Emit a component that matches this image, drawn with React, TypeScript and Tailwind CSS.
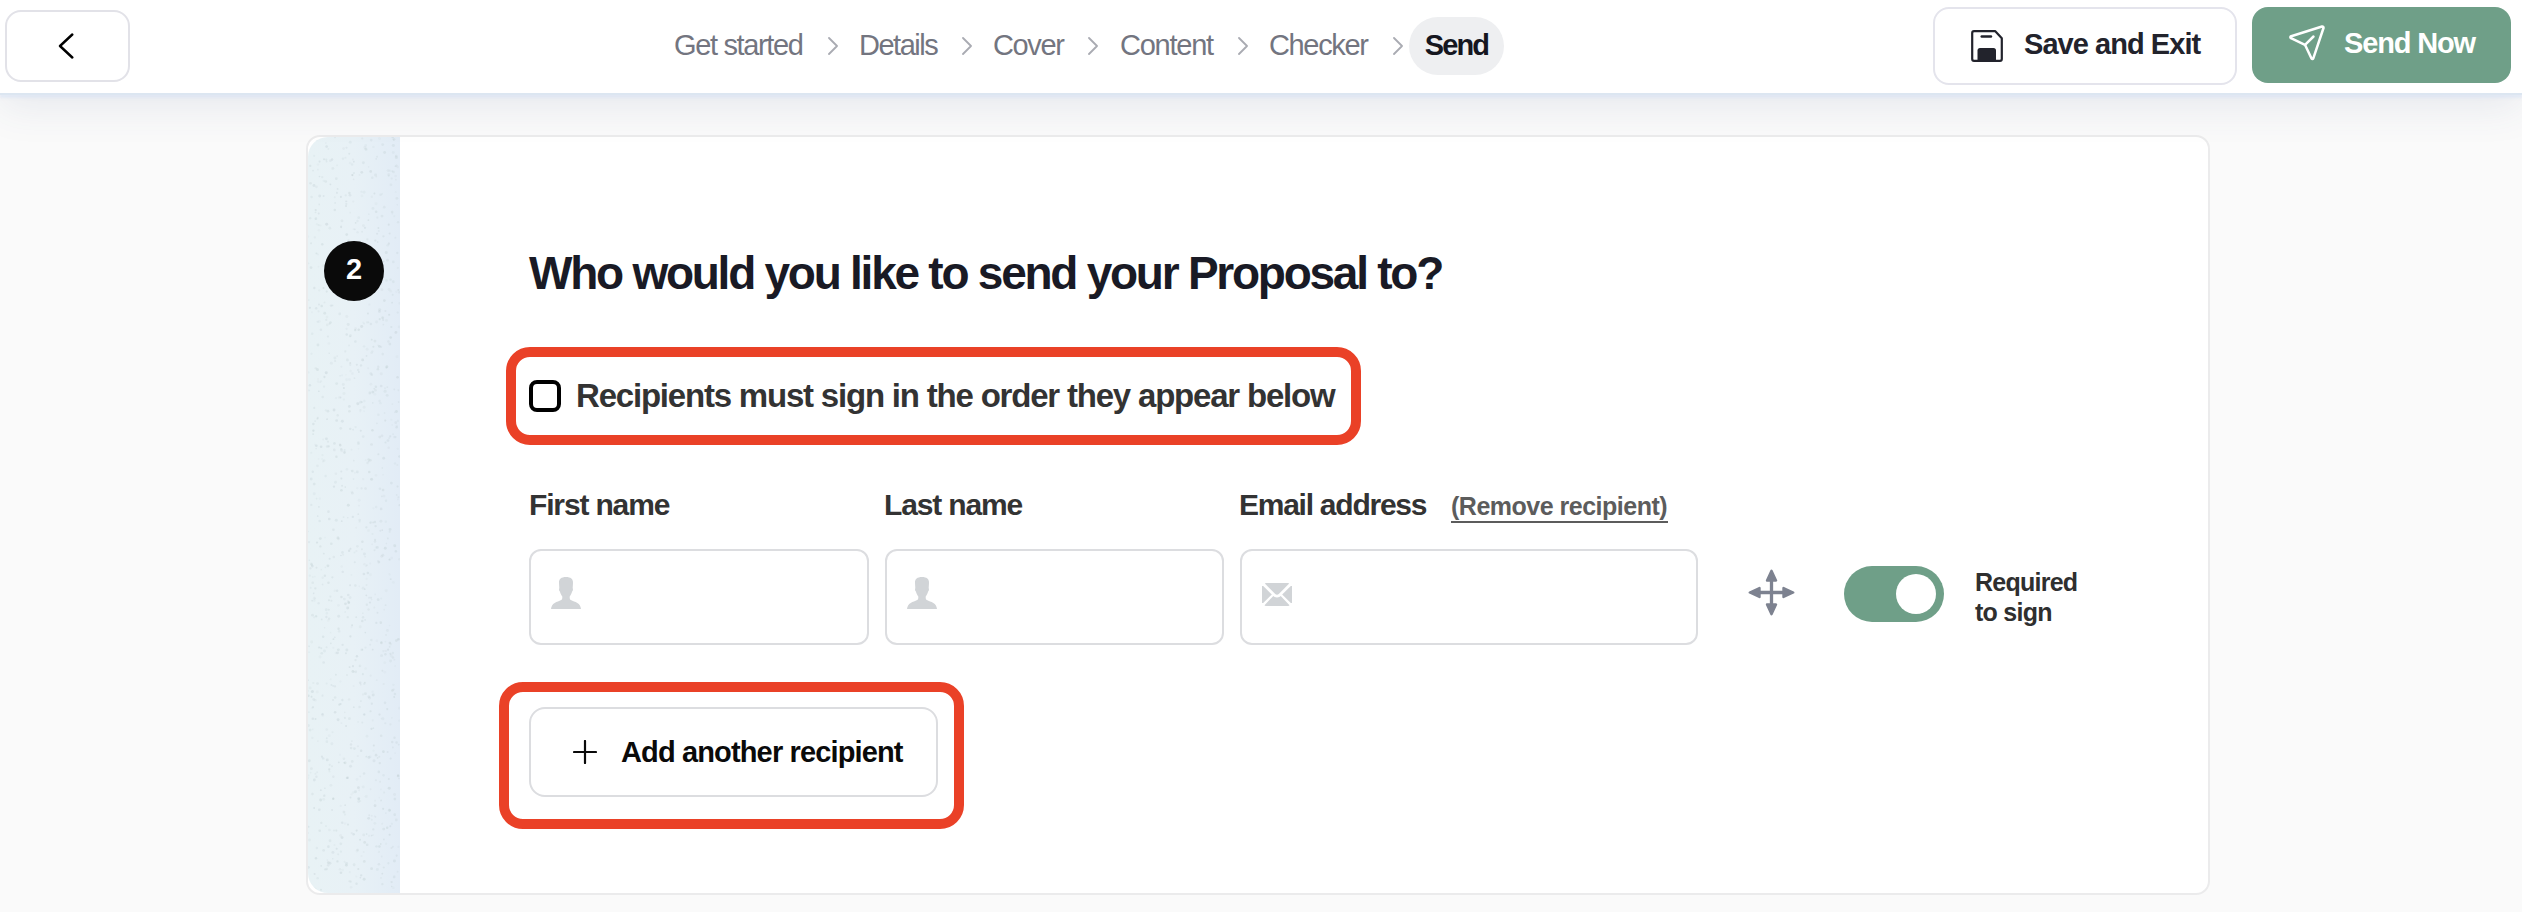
import { useMemo, useState } from "react";

const steps = [
  { label: "Get started", text: "w-[129px] tracking-[-1.35px]", gap: "ml-[24px] mr-[20px]" },
  { label: "Details", text: "w-[78px] tracking-[-1.5px]", gap: "ml-[24px] mr-[20px]" },
  { label: "Cover", text: "w-[72px] tracking-[-1.35px]", gap: "ml-[22px] mr-[21px]" },
  { label: "Content", text: "w-[94px] tracking-[-1.25px]", gap: "ml-[23px] mr-[20px]" },
  { label: "Checker", text: "w-[99px] tracking-[-1.35px]", gap: "ml-[24px] mr-[5px]" },
];

function PersonIcon() {
  return (
    <svg width="30" height="32" viewBox="0 0 30 32" fill="#d1d4d7">
      <path d="M15 0c4.600 0 7.300 2 7 6l-.3 5c.6 1.600.1 3-.6 3.500-.5 2.200-1.500 3.800-2.300 4.800-.3 1.700-.1 3.200 1 3.800 2 1.200 4.500 1.700 6.500 2.900 2.300 1.300 3.400 3.400 3.700 6H0c.3-2.600 1.400-4.700 3.700-6 2-1.200 4.500-1.700 6.500-2.900 1.100-.6 1.300-2.100 1-3.800-.8-1-1.800-2.600-2.300-4.800-.7-.5-1.200-1.900-.6-3.500L8 6c-.3-4 2.400-6 7-6z" />
    </svg>
  );
}

function MailIcon() {
  return (
    <svg width="30" height="23" viewBox="0 0 30 23" fill="#d1d4d7">
      <path d="M2.800.5Q3.200 0 4 0h22q.8 0 1.200.5L17 10.800q-2 1.800-4 0z" />
      <path d="M0 3l1.200 0 8.600 8.500L1.200 20H0z" />
      <path d="M30 3l-1.200 0-8.600 8.500 8.600 8.500H30z" />
      <path d="M11.300 13l.9.700q2.800 1.500 5.600 0l.9-.7 8.800 9.300q-.5.700-1.300.7H3.800q-.8 0-1.300-.7z" />
    </svg>
  );
}

function Field({ icon, className }: { icon: "person" | "mail"; className: string }) {
  return (
    <div className={`flex h-24 rounded-xl border-2 border-[#dcdde0] bg-white pl-5 ${className}`}>
      <span className={icon === "person" ? "pt-[26px]" : "pt-8"}>
        {icon === "person" ? <PersonIcon /> : <MailIcon />}
      </span>
    </div>
  );
}

// Speckled paper strip down the left of the card
function StepStrip() {
  const dots = useMemo(() => {
    let seed = 7;
    const rand = () => {
      seed = (seed * 16807) % 2147483647;
      return seed / 2147483647;
    };
    return Array.from({ length: 1100 }, () => ({
      x: rand() * 92,
      y: rand() * 756,
      r: 0.8 + rand() * 0.7,
      o: 0.12 + rand() * 0.3,
    }));
  }, []);

  return (
    <div className="relative w-[92px] shrink-0 overflow-hidden rounded-l-[20px] bg-linear-to-r from-[#e8f2f5] via-[#e8f1f6] to-[#e2ecf6]">
      <svg className="absolute inset-0" width="92" height="756">
        {dots.map((d, i) => (
          <circle key={i} cx={d.x} cy={d.y} r={d.r} fill="#c2d0d4" opacity={d.o} />
        ))}
      </svg>
      <div className="relative mt-[104px] ml-4 flex size-[60px] items-center justify-center rounded-full bg-[#0a0a0a] pb-0.5 text-[29px] font-bold text-white">
        2
      </div>
    </div>
  );
}

function Header() {
  return (
    <header className="relative z-10 flex h-[95px] items-start border-b-2 border-[#dce6f1] bg-white shadow-[0_3px_2px_rgba(214,226,245,0.5),0_12px_40px_rgba(60,75,130,0.10)]">
      <button className="mt-[10px] ml-[5px] flex h-[72px] w-[125px] shrink-0 items-center rounded-2xl border-2 border-[#e2e2e8] bg-white pl-[51px]">
        <svg width="16" height="26" viewBox="0 0 16 26" fill="none" stroke="#000" strokeWidth="2.4" strokeLinecap="round" strokeLinejoin="round">
          <path d="M14.300 1.500L2 13l12.300 11.500" />
        </svg>
      </button>

      <nav className="mt-[17px] ml-[544px] flex h-[58px] items-center text-[29px] text-[#737580]">
        {steps.map((step) => (
          <div key={step.label} className="flex items-center">
            <span className={`whitespace-nowrap ${step.text}`}>{step.label}</span>
            <svg className={step.gap} width="12" height="18" viewBox="0 0 12 18" fill="none" stroke="#a9abb2" strokeWidth="1.800" strokeLinecap="round" strokeLinejoin="round">
              <path d="M2 1l8 8-8 8" />
            </svg>
          </div>
        ))}
        <span className="flex h-[58px] w-[95px] items-center justify-center rounded-[29px] bg-[#eeeff1] font-bold tracking-[-1.9px] text-[#15161f]">
          Send
        </span>
      </nav>

      <button className="mt-[7px] ml-auto flex h-[78px] w-[304px] items-center rounded-2xl border-2 border-[#e4e4ec] bg-white pl-9">
        <svg width="32" height="32" viewBox="0 0 32 32" fill="none">
          <path d="M1.200 3q0-1.800 1.800-1.800h21.300l6.500 7V29q0 1.800-1.800 1.800H3q-1.800 0-1.800-1.800z" stroke="#22232c" strokeWidth="2.200" strokeLinejoin="round" />
          <path d="M10.700 6.500h9.300" stroke="#22232c" strokeWidth="2.400" strokeLinecap="round" />
          <path d="M6.500 31V20.500q0-2.500 2.500-2.500h13.500q2.500 0 2.500 2.500V31z" fill="#22232c" />
        </svg>
        <span className="ml-[21px] whitespace-nowrap pb-0.5 text-[29px] font-bold tracking-[-0.95px] text-[#22232c]">Save and Exit</span>
      </button>
      <button className="mt-[7px] mr-[11px] ml-[15px] flex h-[76px] w-[259px] items-center rounded-2xl bg-[#6f9f88] pl-[37px]">
        <svg className="-mt-[4px]" width="36" height="36" viewBox="0 0 36 36" fill="none" stroke="#fff" strokeWidth="2.500" strokeLinecap="round" strokeLinejoin="round">
          <path d="M33 1.500L2.200 11.200q-1.600.8-.2 2L16 19.800 22.500 33.500q1 1.300 1.800-.2L34.500 3q.2-1.700-1.500-1.500z" />
          <path d="M16 19.800l8.500-8.300" />
        </svg>
        <span className="ml-[19px] whitespace-nowrap pb-0.5 text-[29px] font-bold tracking-[-1.15px] text-white">Send Now</span>
      </button>
    </header>
  );
}

export default function App() {
  const [required, setRequired] = useState(true);

  return (
    <div className="h-[912px] w-[2522px] overflow-hidden bg-[#fafafa] font-['Liberation_Sans',Arial,sans-serif]">
      <Header />

      <main className="mt-10 ml-[306px] flex h-[760px] w-[1904px] rounded-[14px] border-2 border-[#ebebec] bg-white">
        <StepStrip />

        <div className="flex flex-col items-start">
          <h1 className="mt-[108px] ml-[129px] whitespace-nowrap text-[46px] leading-[56px] font-bold tracking-[-2.25px] text-[#191a25]">
            Who would you like to send your Proposal to?
          </h1>

          <label className="mt-[46px] ml-[106px] flex h-[98px] w-[855px] items-center rounded-3xl border-10 border-[#ea4127] pl-[13px]">
            <span className="size-8 shrink-0 rounded-lg border-4 border-black" />
            <span className="ml-[15px] whitespace-nowrap text-[33px] font-bold tracking-[-1.2px] text-[#333]">
              Recipients must sign in the order they appear below
            </span>
          </label>

          <div className="mt-10 ml-[129px] flex h-16 items-start text-[30px] leading-[40px] font-bold tracking-[-1.15px] whitespace-nowrap text-[#333]">
            <span className="w-[355px]">First name</span>
            <span className="w-[355px]">Last name</span>
            <span className="w-[212px] tracking-[-1.25px]">Email address</span>
            <a className="mt-[5px] h-[33px] w-[217px] border-b-2 border-[#5c5c5c] text-[25px] leading-[32px] tracking-[-0.5px] text-[#5c5c5c]">
              (Remove recipient)
            </a>
          </div>

          <div className="ml-[129px] flex h-24 items-start">
            <Field icon="person" className="w-[340px]" />
            <Field icon="person" className="ml-4 w-[339px]" />
            <Field icon="mail" className="ml-4 w-[458px]" />
            <svg className="mt-5 ml-[50px]" width="47" height="47" viewBox="0 0 47 47" fill="#7d8290" stroke="#7d8290" strokeLinejoin="round">
              <path d="M23.500 8v31M8 23.500h31" strokeWidth="3.300" />
              <path d="M23.500 1.800l4.500 9.700h-9zM23.500 45.200l4.500-9.700h-9zM1.800 23.500l9.700-4.500v9zM45.200 23.500l-9.700-4.500v9z" strokeWidth="2.400" />
            </svg>
            <button
              onClick={() => setRequired(!required)}
              className={`mt-[17px] ml-[49px] flex h-14 w-[100px] items-center rounded-full px-2 ${required ? "justify-end bg-[#6f9f88]" : "justify-start bg-[#d1d4d7]"}`}
            >
              <span className="size-10 rounded-full bg-white" />
            </button>
            <p className="mt-[18px] ml-[31px] text-[25px] leading-[30px] font-bold tracking-[-0.75px] whitespace-nowrap text-[#2f2f2f]">
              Required
              <br />
              to sign
            </p>
          </div>

          <div className="mt-[37px] ml-[99px] flex h-[147px] w-[465px] items-start rounded-3xl border-10 border-[#ea4127] pt-[15px] pl-5">
            <button className="flex h-[90px] w-[409px] items-center rounded-2xl border-2 border-[#dcdde0] bg-white pl-[42px]">
              <svg width="24" height="24" viewBox="0 0 24 24" stroke="#0a0a0a" strokeWidth="2.200" strokeLinecap="round">
                <path d="M12 1v22M1 12h22" />
              </svg>
              <span className="ml-6 whitespace-nowrap pt-0.5 text-[29px] font-bold tracking-[-0.86px] text-[#0a0a0a]">Add another recipient</span>
            </button>
          </div>
        </div>
      </main>
    </div>
  );
}
